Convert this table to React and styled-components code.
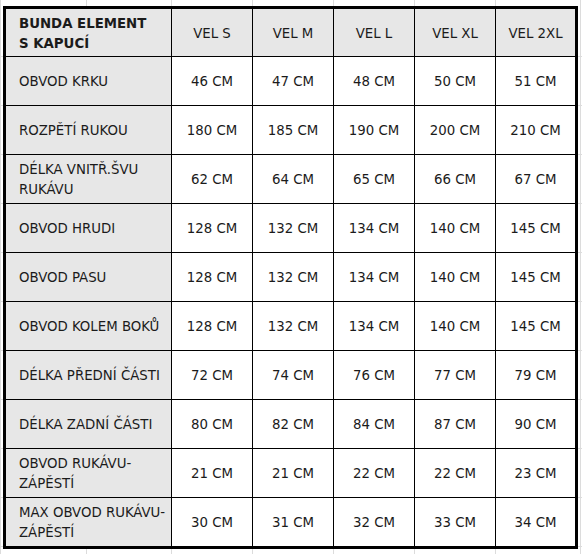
import styled, { createGlobalStyle } from 'styled-components';

const GlobalStyle = createGlobalStyle`
  html, body { margin: 0; padding: 0; background: #fff; }
  body {
    font-family: "DejaVu Sans Condensed", "DejaVu Sans", sans-serif;
    color: #1b1b1b;
  }
`;

const gridX = [0, 86, 171, 252, 333, 414, 495, 580];

// faint spreadsheet gridlines behind the table
const Sheet = styled.div`
  width: 582px;
  height: 554px;
  padding: 6px 0 0 3px;
  box-sizing: border-box;
  background-color: #fff;
  background-image:
    ${gridX.map(x => `linear-gradient(to right, transparent ${x}px, #dcdcdc ${x}px, #dcdcdc ${x + 1}px, transparent ${x + 1}px)`).join(',\n    ')},
    repeating-linear-gradient(to bottom, transparent 0, transparent 48px, #dcdcdc 48px, #dcdcdc 49px);
  background-repeat: no-repeat, no-repeat, no-repeat, no-repeat, no-repeat, no-repeat, no-repeat, no-repeat, repeat;
  background-position: 0 0, 0 0, 0 0, 0 0, 0 0, 0 0, 0 0, 0 0, 0 8px;
`;

const Table = styled.table`
  border-collapse: separate;
  border-spacing: 0;
  border: 3px solid #000;
  table-layout: fixed;
  width: 575px;
  background: #fff;
  font-size: 14.8px;
`;

const Col = styled.col`
  width: ${p => p.$w}px;
`;

const Row = styled.tr`
  height: ${p => p.$h}px;
`;

const Cell = styled.td`
  padding: 0;
  border-right: 1px solid #000;
  border-bottom: 1px solid #000;
  text-align: center;
  vertical-align: middle;
  line-height: 20px;
  background: ${p => (p.$shade ? '#e7e7e7' : '#fff')};
  white-space: nowrap;

  &:last-child { border-right: none; }
  tr:last-child > & { border-bottom: none; }
`;

const LabelCell = styled(Cell)`
  text-align: left;
  padding-left: 13px;
  background: #e7e7e7;
  font-weight: ${p => (p.$bold ? 700 : 400)};
  white-space: normal;
`;

const columnWidths = [166, 81, 81, 81, 81, 79];

const sizes = ['VEL S', 'VEL M', 'VEL L', 'VEL XL', 'VEL 2XL'];

const rows = [
  ['OBVOD KRKU', [46, 47, 48, 50, 51]],
  ['ROZPĚTÍ RUKOU', [180, 185, 190, 200, 210]],
  [['DÉLKA VNITŘ.ŠVU', 'RUKÁVU'], [62, 64, 65, 66, 67]],
  ['OBVOD HRUDI', [128, 132, 134, 140, 145]],
  ['OBVOD PASU', [128, 132, 134, 140, 145]],
  ['OBVOD KOLEM BOKŮ', [128, 132, 134, 140, 145]],
  ['DÉLKA PŘEDNÍ ČÁSTI', [72, 74, 76, 77, 79]],
  ['DÉLKA ZADNÍ ČÁSTI', [80, 82, 84, 87, 90]],
  [['OBVOD RUKÁVU-', 'ZÁPĚSTÍ'], [21, 21, 22, 22, 23]],
  [['MAX OBVOD RUKÁVU-', 'ZÁPĚSTÍ'], [30, 31, 32, 33, 34]],
];

function Label({ text }) {
  if (!Array.isArray(text)) return text;
  return text.map((t, i) => (
    <span key={i}>{i > 0 && <br />}{t}</span>
  ));
}

export default function App() {
  return (
    <>
      <GlobalStyle />
      <Sheet>
        <Table>
          <colgroup>
            {columnWidths.map((w, i) => <Col key={i} $w={w} />)}
          </colgroup>
          <tbody>
            <Row $h={48}>
              <LabelCell $bold>
                <Label text={['BUNDA ELEMENT', 'S KAPUCÍ']} />
              </LabelCell>
              {sizes.map(s => (
                <Cell key={s} $shade>{s}</Cell>
              ))}
            </Row>
            {rows.map(([label, values], i) => (
              <Row key={i} $h={i === rows.length - 1 ? 48 : 49}>
                <LabelCell>
                  <Label text={label} />
                </LabelCell>
                {values.map((v, j) => (
                  <Cell key={j}>{v} CM</Cell>
                ))}
              </Row>
            ))}
          </tbody>
        </Table>
      </Sheet>
    </>
  );
}
